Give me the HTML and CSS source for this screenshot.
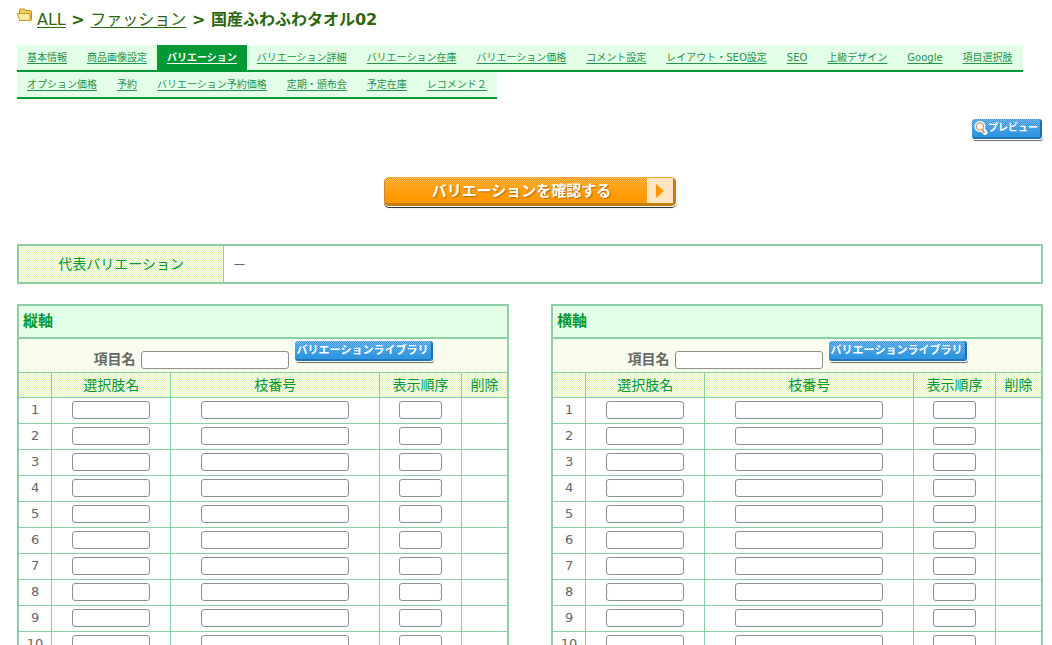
FILE: index.html
```html
<!DOCTYPE html>
<html lang="ja">
<head>
<meta charset="utf-8">
<title>バリエーション</title>
<link rel="stylesheet" href="styles.css">
</head>
<body>
<h1 class="crumbs">
  <svg class="folder" viewBox="0 0 16 14" aria-hidden="true">
    <path d="M2.5 6V2Q2.500 1 3.500 1H7.500L8.500 2.500H13.500Q14.500 2.500 14.500 3.500V11.500L13 12.500H3Z" fill="#f3cf58" stroke="#c08a1c"/>
    <path d="M.5 5.500H12.500L13.500 12.500H2.500Z" fill="#fdeb9b" stroke="#c9972b"/>
  </svg>
  <span><a href="#">ALL</a> &gt; <a href="#">ファッション</a> &gt; 国産ふわふわタオル02</span>
</h1>
<nav class="tabs">
  <a href="#">基本情報</a><a href="#">商品画像設定</a><a href="#" class="active">バリエーション</a><a href="#">バリエーション詳細</a><a href="#">バリエーション在庫</a><a href="#">バリエーション価格</a><a href="#">コメント設定</a><a href="#">レイアウト・SEO設定</a><a href="#">SEO</a><a href="#">上級デザイン</a><a href="#">Google</a><a href="#">項目選択肢</a><a href="#">オプション価格</a><a href="#">予約</a><a href="#">バリエーション予約価格</a><a href="#">定期・頒布会</a><a href="#">予定在庫</a><a href="#">レコメンド２</a>
</nav>
<div class="preview-bar">
  <button type="button" class="blue preview"><svg viewBox="0 0 14 14" aria-hidden="true"><path d="M6.500 6L11 11.500" stroke="#fff" stroke-width="5" stroke-linecap="round"/><circle cx="6" cy="5.500" r="5.500" fill="#fff"/><path d="M8.500 9L10.500 12" stroke="#d98d4c" stroke-width="2"/><circle cx="6" cy="5.500" r="3.700" fill="#fff" stroke="#d9985f" stroke-width="1.300"/></svg>プレビュー</button>
</div>
<div class="confirm-bar">
  <button type="button" class="confirm"><span class="confirm-text">バリエーションを確認する</span><span class="confirm-arrow"><svg viewBox="0 0 8 14" aria-hidden="true"><path d="M0 0L8 7L0 14Z" fill="#f90"/></svg></span></button>
</div>
<table class="summary">
  <tr><th scope="row">代表バリエーション</th><td>－</td></tr>
</table>
<main class="axes">
  <section class="axis">
    <h2>縦軸</h2>
    <div class="item"><label for="name-v">項目名</label><input id="name-v" type="text" class="long"><button type="button" class="blue library">バリエーションライブラリ</button></div>
    <table class="choices" data-axis="縦軸"></table>
  </section>
  <section class="axis">
    <h2>横軸</h2>
    <div class="item"><label for="name-h">項目名</label><input id="name-h" type="text" class="long"><button type="button" class="blue library">バリエーションライブラリ</button></div>
    <table class="choices" data-axis="横軸"></table>
  </section>
</main>
<script src="rows.js"></script>
</body>
</html>
```
FILE: styles.css
```css
* { box-sizing: border-box; }
:root {
  --line: #8bd0a5;
  --green: #093;
  --mint: #e4ffe7;
  --check: repeating-conic-gradient(#e2f4b6 0 25%, #fff 0 50%) 0 0 / 2px 2px;
}
body {
  margin: 0;
  padding: 8px 9px 0 17px;
  background: #fff;
  color: #666;
  font: 14px/20px "DejaVu Sans", "Noto Sans CJK JP", sans-serif;
}
.crumbs {
  display: flex;
  align-items: flex-start;
  gap: 4px;
  height: 37px;
  margin: 0;
  color: #2d660a;
  font-size: 16px;
  line-height: 24px;
}
.crumbs a { color: inherit; font-weight: normal; text-underline-offset: 2px; text-decoration-thickness: 1px; }
.folder { width: 16px; height: 14px; }

.tabs { display: flex; flex-wrap: wrap; }
.tabs a {
  height: 27px;
  padding: 0 10px;
  border-bottom: 2px solid var(--green);
  background: var(--mint);
  color: #25934a;
  font-size: 10px;
  line-height: 25px;
  text-underline-offset: 2px;
}
.tabs .active { background: var(--green); color: #fff; font-weight: bold; }

button { border: 0; padding: 0; color: #fff; font-family: inherit; font-weight: bold; cursor: pointer; }
.blue {
  height: 20px;
  border-bottom: 2px solid #1d76bd;
  border-right: 2px solid #1d70b0;
  border-radius: 3px;
  background:
    linear-gradient(transparent, #3196e2 85%),
    repeating-conic-gradient(#8cc8f3 0 25%, #3493dc 0 50%) 0 0 / 2px 2px;
  box-shadow: 0 1px 0 #fff, 1px 1px 0 #fff, 1px 2px 0 #777, 1px 2px 1px #999;
  font-size: 11px;
  line-height: 20px;
  white-space: nowrap;
}
.preview-bar { display: flex; justify-content: flex-end; margin-top: 20px; padding-right: 1px; }
.preview { display: flex; align-items: center; width: 70px; padding-left: 2px; font-size: 10px; }
.preview svg { width: 14px; height: 14px; flex: none; }

.confirm-bar { display: flex; justify-content: center; margin-top: 38px; }
.confirm {
  display: flex;
  width: 292px;
  height: 29px;
  border: solid #c67d0c;
  border-width: 1px 3px 3px 1px;
  border-top-color: #f6a437;
  border-left-color: #c98833;
  border-radius: 5px;
  background:
    linear-gradient(transparent, #f90 75%),
    repeating-conic-gradient(#ffc266 0 25%, #f90 0 50%) 0 0 / 2px 2px;
  box-shadow: 0 1px 0 #fff, 1px 1px 0 #fff, 0 2px 0 #333, 1px 2px 1px #888;
  font-size: 15px;
  line-height: 27px;
}
.confirm-text { flex: 1; padding-left: 11px; text-shadow: 1px 1px 1px #b26b00; }
.confirm-arrow { display: flex; align-items: center; justify-content: center; width: 26px; height: 100%; background: #ffe5c2; }
.confirm-arrow svg { width: 8px; height: 14px; }

.summary {
  width: 100%;
  height: 40px;
  margin-top: 38px;
  border: 2px solid var(--line);
  border-spacing: 0;
}
.summary th { width: 20%; padding: 0; background: var(--check); color: var(--green); font-weight: normal; }
.summary td { padding: 0 8px; border-left: 1px solid var(--line); }

.axes { display: grid; grid-template-columns: 1fr 1fr; gap: 42px; margin-top: 20px; }
.axis { border: 2px solid var(--line); }
.axis h2 {
  margin: 0;
  padding: 0 4px;
  border-bottom: 2px solid var(--line);
  background: var(--mint);
  color: var(--green);
  font-size: 15px;
  line-height: 31px;
}
.item { display: flex; justify-content: center; align-items: flex-start; height: 33px; padding-top: 2px; background: #f9fded; }
.item label { margin: 8px 5px 0 0; font-weight: bold; }
.item input { margin-top: 10px; }
.library { width: 138px; margin-left: 6px; }

input { height: 18px; padding: 0 4px; border: 1px solid #8f8f8f; border-radius: 3px; background: #fff; font-size: 12px; }
.short { width: 78px; }
.long { width: 148px; }
.order { width: 43px; }
.choices { width: 100%; table-layout: fixed; border-spacing: 0; }
.choices th, .choices td { padding: 0; border-top: 1px solid var(--line); border-left: 1px solid var(--line); text-align: center; font-weight: normal; }
.choices th:first-child, .choices td:first-child { border-left: 0; }
.choices th { height: 25px; padding-bottom: 1px; background: var(--check); color: var(--green); }
.choices td { height: 26px; padding-bottom: 1px; font-size: 13px; }
.choices input { display: block; margin: 0 auto; }
.c-no { width: 6.6%; }
.c-name { width: 24.4%; }
.c-code { width: 42.8%; }
.c-order { width: 16.8%; }
```
FILE: rows.js
```js
document.querySelectorAll('.choices').forEach(function (table) {
  var axis = table.dataset.axis;
  var html = '<thead><tr><th class="c-no"></th><th class="c-name">選択肢名</th><th class="c-code">枝番号</th><th class="c-order">表示順序</th><th>削除</th></tr></thead><tbody>';
  for (var i = 1; i <= 10; i++) {
    html += '<tr><td>' + i + '</td>' +
      '<td><input type="text" class="short" aria-label="' + axis + ' 選択肢名 ' + i + '"></td>' +
      '<td><input type="text" class="long" aria-label="' + axis + ' 枝番号 ' + i + '"></td>' +
      '<td><input type="text" class="order" aria-label="' + axis + ' 表示順序 ' + i + '"></td><td></td></tr>';
  }
  table.innerHTML = html + '</tbody>';
});
```
